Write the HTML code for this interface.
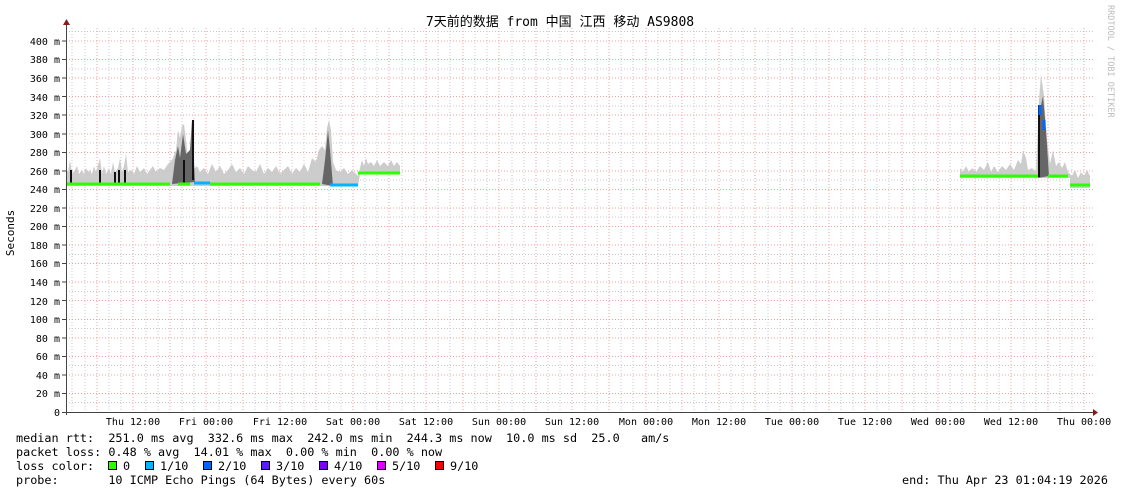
<!DOCTYPE html>
<html><head><meta charset="utf-8"><style>
html,body{margin:0;padding:0;background:#fff;width:1121px;height:494px;overflow:hidden}
svg{display:block}
text{font-family:"DejaVu Sans Mono","Liberation Mono","Noto Sans CJK SC",monospace;fill:#000}
.t{font-size:10px}
.l{font-size:11.8px}
</style></head><body>
<svg width="1121" height="494" viewBox="0 0 1121 494">
<rect width="1121" height="494" fill="#fff"/>
<g stroke="#c8c8c8" stroke-width="1" stroke-dasharray="1,2" shape-rendering="crispEdges">
<path d="M66 402.7H1093M66 365.6H1093M66 328.5H1093M66 291.4H1093M66 254.3H1093M66 217.2H1093M66 180.1H1093M66 143H1093M66 105.9H1093M66 68.8H1093M66 31.7H1093"/>
<path d="M72 28V412M85 28V412M109 28V412M121 28V412M146 28V412M158 28V412M182 28V412M194 28V412M219 28V412M231 28V412M255 28V412M267 28V412M292 28V412M304 28V412M329 28V412M341 28V412M365 28V412M377 28V412M402 28V412M414 28V412M438 28V412M450 28V412M475 28V412M487 28V412M512 28V412M524 28V412M548 28V412M560 28V412M585 28V412M597 28V412M621 28V412M633 28V412M658 28V412M670 28V412M694 28V412M706 28V412M731 28V412M743 28V412M768 28V412M780 28V412M804 28V412M816 28V412M841 28V412M853 28V412M877 28V412M889 28V412M914 28V412M926 28V412M950 28V412M962 28V412M987 28V412M999 28V412M1024 28V412M1036 28V412M1060 28V412M1072 28V412"/>
</g>
<g stroke="#f0a0a0" stroke-width="1" stroke-dasharray="1,2" shape-rendering="crispEdges">
<path d="M66 393.5H1093M66 374.9H1093M66 356.4H1093M66 337.8H1093M66 319.3H1093M66 300.7H1093M66 282.2H1093M66 263.6H1093M66 245.1H1093M66 226.5H1093M66 208H1093M66 189.4H1093M66 170.9H1093M66 152.3H1093M66 133.8H1093M66 115.2H1093M66 96.7H1093M66 78.1H1093M66 59.6H1093M66 41H1093"/>
<path d="M97 28V412M133 28V412M170 28V412M206 28V412M243 28V412M280 28V412M316 28V412M353 28V412M389 28V412M426 28V412M463 28V412M499 28V412M536 28V412M572 28V412M609 28V412M646 28V412M682 28V412M719 28V412M755 28V412M792 28V412M829 28V412M865 28V412M902 28V412M938 28V412M975 28V412M1011 28V412M1048 28V412M1084 28V412"/>
</g>
<!-- smoke -->
<path fill="#cccccc" d="M66 184L66 168 68 172 70 160 72 174 75 170 77 166 79 174 82 170 84 174 86 168 88 172 90 170 92 174 94 166 96 172 100 158 102 174 104 166 106 174 109 168 111 174 113 162 115 172 118 168 120 158 122 172 124 166 126 154 128 172 131 170 134 174 137 166 140 172 144 168 147 174 150 170 153 166 156 172 160 168 164 170 168 164 172 160 176 150 178 130 180 138 182 126 184 124 186 140 188 160 191 150 193 170 197 166 200 172 204 168 208 174 212 164 216 172 220 166 224 174 228 170 232 164 236 172 240 168 244 174 248 166 252 170 256 172 260 164 264 174 268 168 272 172 276 166 280 174 284 170 288 166 292 174 296 168 300 172 304 164 308 172 312 158 316 162 319 150 322 146 325 150 327 128 329 120 331 130 333 162 336 170 340 172 344 168 348 174 352 170 356 174 358 176 360 168 362 160 364 166 366 158 368 164 371 162 374 166 377 160 380 166 384 162 388 166 391 160 394 166 397 162 400 166 400 174 360 174 358 186 66 186Z"/>
<path fill="#cccccc" d="M960 178L960 168 963 172 966 166 969 172 972 168 976 172 980 166 984 170 988 162 991 172 994 166 998 172 1002 166 1006 170 1010 164 1014 170 1018 160 1021 164 1023 150 1026 158 1028 170 1032 168 1036 172 1039 100 1041 74 1044 96 1047 140 1050 164 1053 150 1056 166 1059 162 1062 168 1065 162 1068 172 1072 176 1075 170 1078 178 1081 172 1084 176 1087 170 1090 176 1090 188 1070 188 1070 178Z"/>
<path fill="#666" d="M172 184L175 160 178 146 180 158 183 134 186 154 190 150 192 120 195 182Z M322 184L325 160 328 130 330 150 333 186Z M1038 178L1040 110 1043 96 1046 130 1049 176Z"/>
<g fill="#111">
<rect x="70" y="170" width="2" height="15"/><rect x="99" y="170" width="2" height="15"/><rect x="114" y="172" width="2" height="13"/><rect x="118" y="170" width="2" height="15"/><rect x="124" y="170" width="2" height="15"/><rect x="183" y="160" width="2" height="25"/><rect x="192" y="120" width="2" height="60"/><rect x="1038" y="105" width="2" height="72"/>
</g>
<g stroke-width="3" fill="none">
<path stroke="#2eff00" d="M66 184H170M178 184H190M210 184H320M358 173H400"/>
<path stroke="#00b4ff" d="M194 183H210M330 185H358"/>
<path stroke="#2eff00" d="M960 176H1038M1048 176H1068M1070 185H1090"/>
<path stroke="#0066ff" d="M1040 105V115M1044 120V130"/>
</g>
<g stroke="#444" stroke-width="1" shape-rendering="crispEdges">
<path d="M66.5 24V415M62 412.5H1094"/>
<path d="M62 393.5H66M62 374.9H66M62 356.4H66M62 337.8H66M62 319.3H66M62 300.7H66M62 282.2H66M62 263.6H66M62 245.1H66M62 226.5H66M62 208H66M62 189.4H66M62 170.9H66M62 152.3H66M62 133.8H66M62 115.2H66M62 96.7H66M62 78.1H66M62 59.6H66M62 41H66"/>
</g>
<path d="M63 25L66.5 19 70 25Z" fill="#8b1a1a"/>
<path d="M1093 409L1098 412.5 1093 416Z" fill="#8b1a1a"/>
<g class="t" text-anchor="end">
<text x="60" y="416">0</text><text x="60" y="397">20 m</text><text x="60" y="379">40 m</text><text x="60" y="360">60 m</text><text x="60" y="342">80 m</text><text x="60" y="323">100 m</text><text x="60" y="305">120 m</text><text x="60" y="286">140 m</text><text x="60" y="267">160 m</text><text x="60" y="249">180 m</text><text x="60" y="230">200 m</text><text x="60" y="212">220 m</text><text x="60" y="193">240 m</text><text x="60" y="175">260 m</text><text x="60" y="156">280 m</text><text x="60" y="138">300 m</text><text x="60" y="119">320 m</text><text x="60" y="101">340 m</text><text x="60" y="82">360 m</text><text x="60" y="63">380 m</text><text x="60" y="45">400 m</text>
</g>
<g class="t" text-anchor="middle">
<text x="133" y="425">Thu 12:00</text><text x="206" y="425">Fri 00:00</text><text x="280" y="425">Fri 12:00</text><text x="353" y="425">Sat 00:00</text><text x="426" y="425">Sat 12:00</text><text x="499" y="425">Sun 00:00</text><text x="572" y="425">Sun 12:00</text><text x="646" y="425">Mon 00:00</text><text x="719" y="425">Mon 12:00</text><text x="792" y="425">Tue 00:00</text><text x="865" y="425">Tue 12:00</text><text x="938" y="425">Wed 00:00</text><text x="1011" y="425">Wed 12:00</text><text x="1084" y="425">Thu 00:00</text>
</g>
<text x="560" y="26" text-anchor="middle" style="font-size:13px">7天前的数据 from 中国 江西 移动 AS9808</text>
<text transform="translate(14,233) rotate(-90)" text-anchor="middle" style="font-size:11px">Seconds</text>
<text transform="translate(1108,5) rotate(90)" style="font-size:8.5px;fill:#bbb">RRDTOOL / TOBI OETIKER</text>
<g class="l">
<text x="16" y="442" xml:space="preserve">median rtt:  251.0 ms avg  332.6 ms max  242.0 ms min  244.3 ms now  10.0 ms sd  25.0   am/s</text>
<text x="16" y="456" xml:space="preserve">packet loss: 0.48 % avg  14.01 % max  0.00 % min  0.00 % now</text>
<text x="16" y="470" xml:space="preserve">loss color:  </text>
<text x="123" y="470">0</text><text x="160" y="470">1/10</text><text x="218" y="470">2/10</text><text x="276" y="470">3/10</text><text x="334" y="470">4/10</text><text x="392" y="470">5/10</text><text x="450" y="470">9/10</text>
<text x="16" y="484" xml:space="preserve">probe:       10 ICMP Echo Pings (64 Bytes) every 60s</text>
<text x="902" y="484">end: Thu Apr 23 01:04:19 2026</text>
</g>
<g stroke="#000" stroke-width="1" shape-rendering="crispEdges">
<rect x="108.5" y="461.5" width="8" height="8" fill="#2eff00"/>
<rect x="145.5" y="461.5" width="8" height="8" fill="#00b4ff"/>
<rect x="203.5" y="461.5" width="8" height="8" fill="#0066ff"/>
<rect x="261.5" y="461.5" width="8" height="8" fill="#5b1aff"/>
<rect x="319.5" y="461.5" width="8" height="8" fill="#7e00ff"/>
<rect x="377.5" y="461.5" width="8" height="8" fill="#dd00ff"/>
<rect x="435.5" y="461.5" width="8" height="8" fill="#ff0000"/>
</g>
</svg>
</body></html>
